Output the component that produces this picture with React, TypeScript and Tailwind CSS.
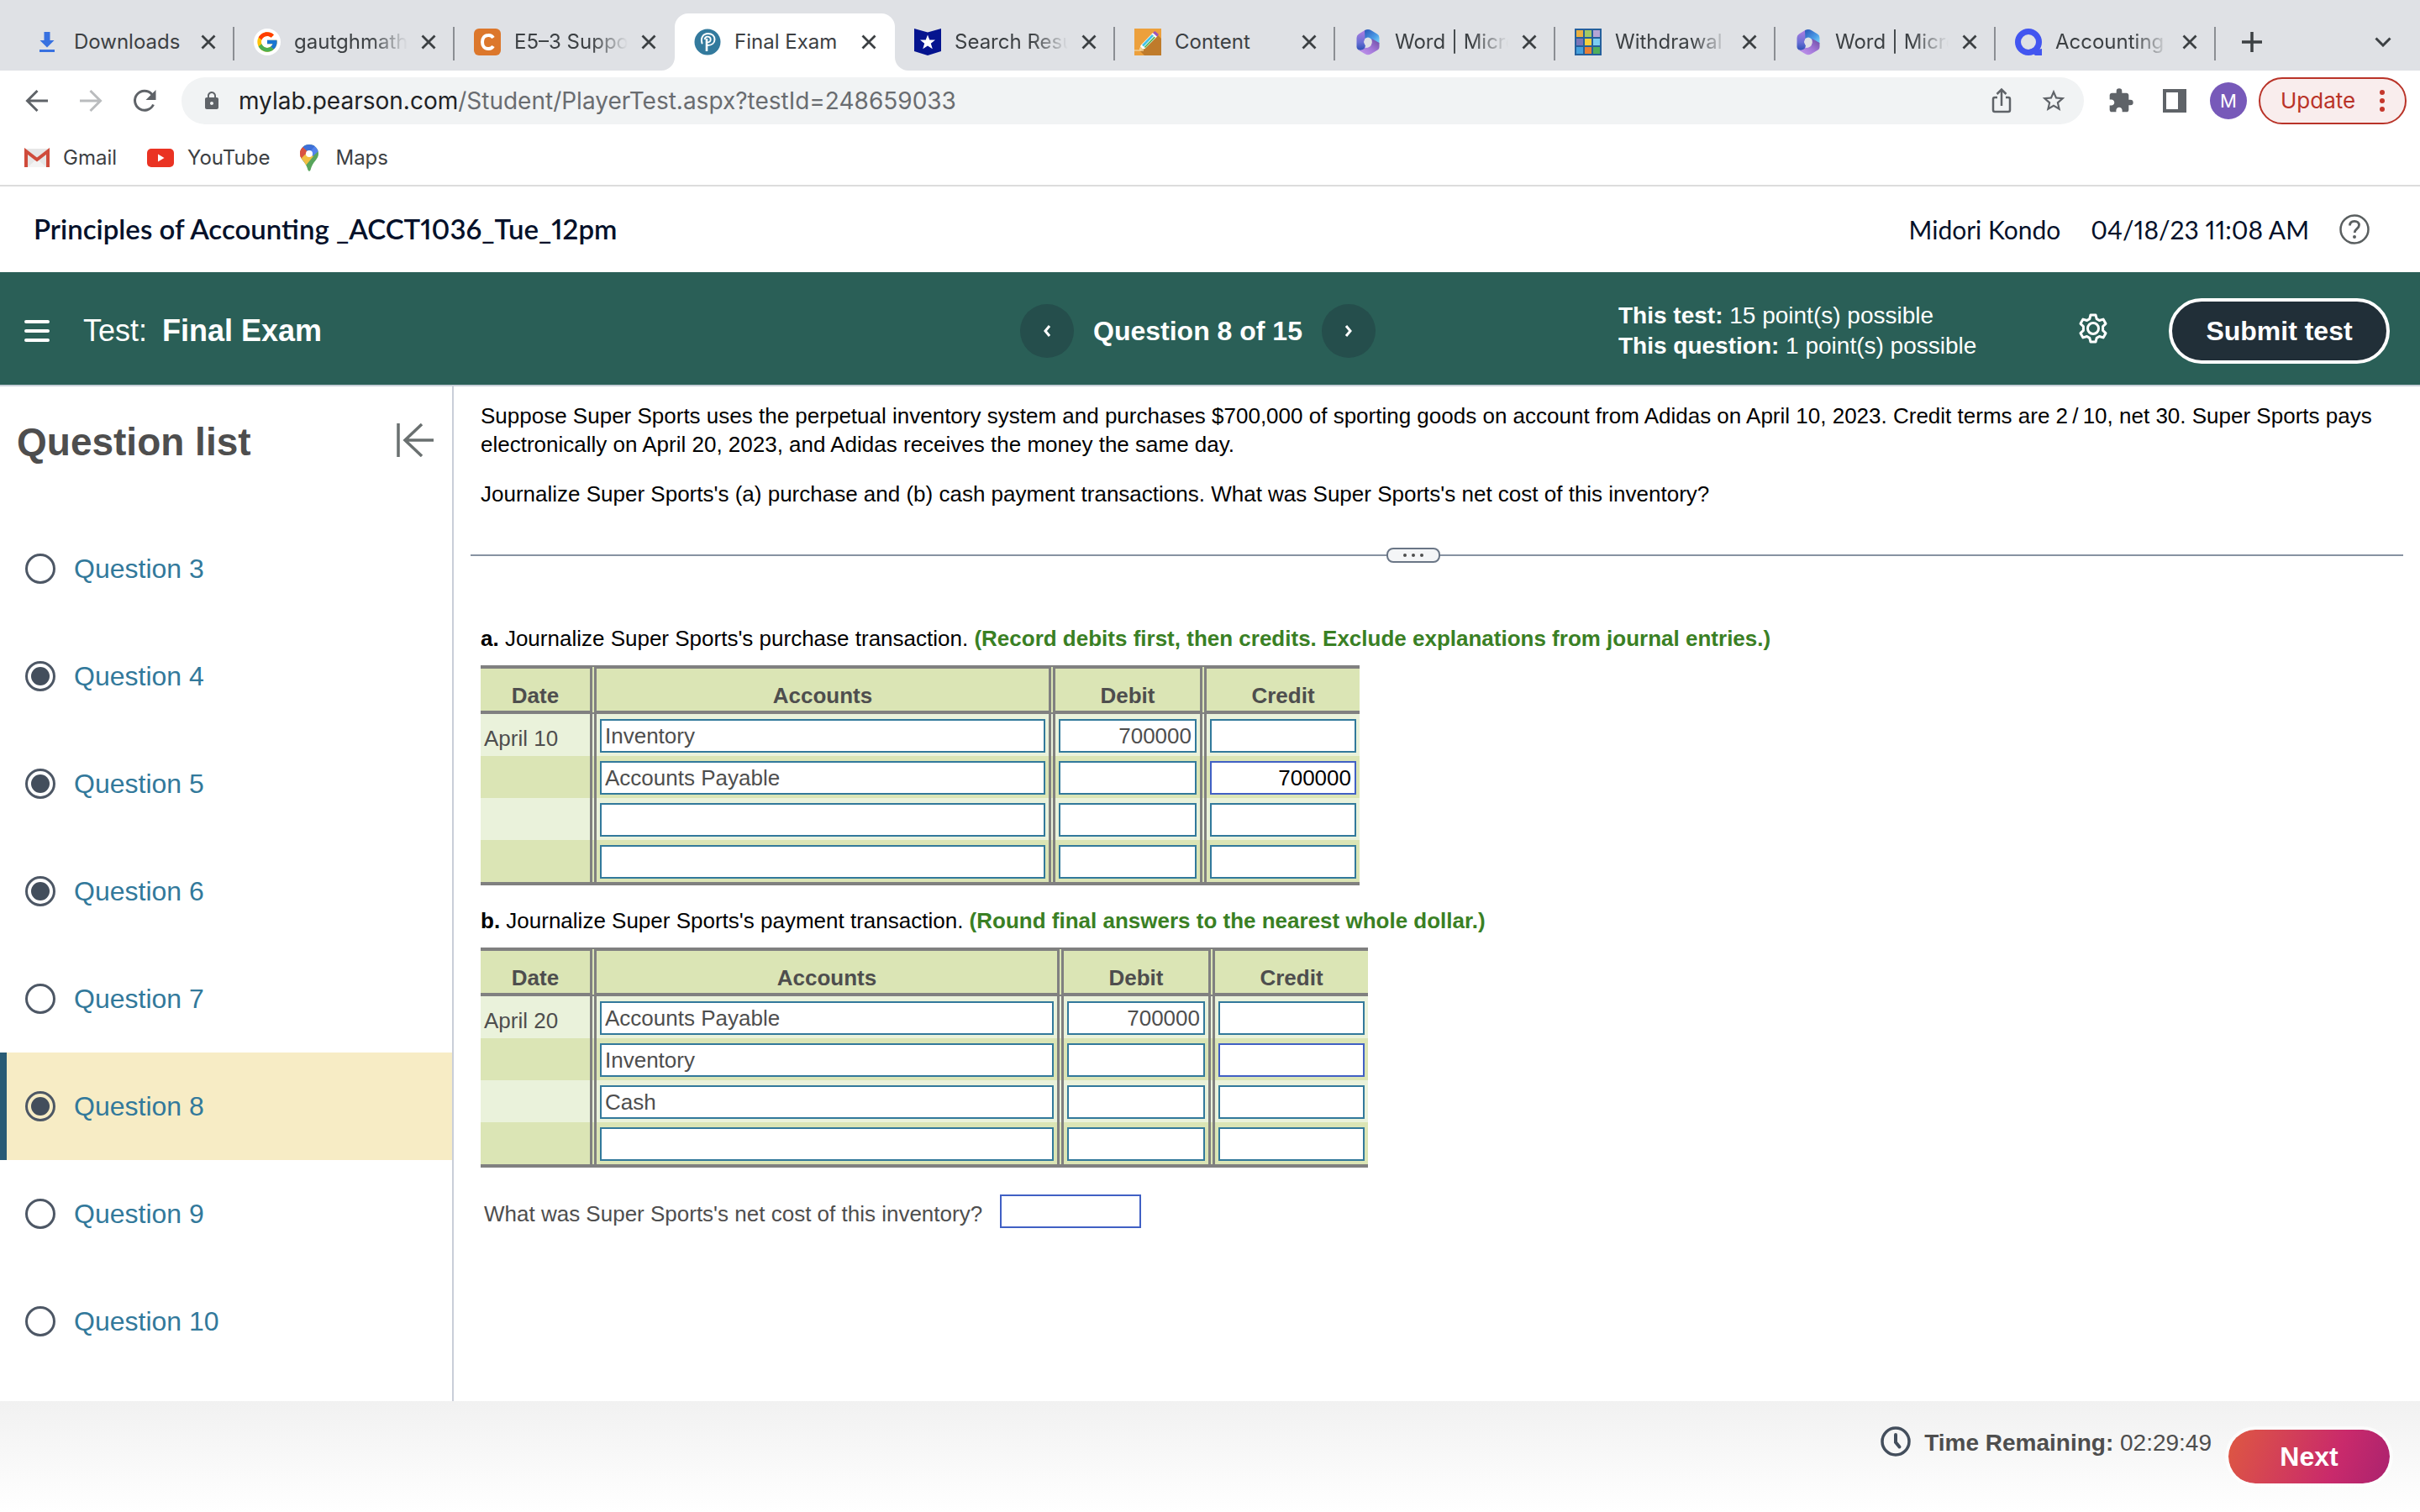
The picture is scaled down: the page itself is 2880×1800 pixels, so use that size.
import { useId, type ReactNode } from "react";
import { FcGoogle } from "react-icons/fc";
import { MdExtension, MdLock, MdStarOutline } from "react-icons/md";

type TabItem = { title: string; icon: ReactNode; active?: boolean; divider?: boolean; fade?: boolean };

function DownloadIcon() {
  return (
    <svg viewBox="0 0 32 32" className="size-8" aria-hidden="true">
      <path d="M12.500 4h7v10h5L16 22.500 7.500 14h5z" fill="#3871e0" />
      <rect x="7" y="25" width="18" height="3" fill="#3871e0" />
    </svg>
  );
}

function GoogleIcon() {
  return (
    <span className="flex size-8 items-center justify-center rounded-full bg-white">
      <FcGoogle className="size-7" />
    </span>
  );
}

function CheggIcon() {
  return (
    <svg viewBox="0 0 32 32" className="size-8" aria-hidden="true">
      <rect width="32" height="32" rx="6" fill="#dc772b" />
      <path d="M23 11A6.500 7 0 0 0 17 8c-4.500 0-7 3.400-7 8s2.500 8 7 8a6.500 7 0 0 0 6-3" fill="none" stroke="#fff" strokeWidth="4" />
    </svg>
  );
}

function PearsonIcon() {
  return (
    <svg viewBox="0 0 32 32" className="size-8" aria-hidden="true">
      <circle cx="16" cy="16" r="15.500" fill="#337a9d" />
      <path d="M9.500 17.500C7.500 11 11 6 16.500 6c5 0 8 2.800 8 7s-3.500 7-8.500 7" fill="none" stroke="#fff" strokeWidth="2" strokeLinecap="round" />
      <path d="M12.500 13c.5-2.500 2.200-3.500 4-3.300 2 .2 3.200 1.500 3.200 3.300 0 2-1.500 3.500-4.200 3.500" fill="none" stroke="#fff" strokeWidth="1.800" />
      <path d="M15 12v15" stroke="#fff" strokeWidth="2.600" />
    </svg>
  );
}

function StarShieldIcon() {
  return (
    <svg viewBox="0 0 32 32" className="size-8" aria-hidden="true">
      <path d="M0 0l16 4.500L32 0v27l-16 5-16-5z" fill="#05148f" />
      <path d="M16 7.500l2.300 6H25l-5.200 4.200 2 6.600L16 20.500l-5.800 3.800 2-6.600L7 13.500h6.700z" fill="#fff" />
    </svg>
  );
}

function PencilIcon() {
  return (
    <svg viewBox="0 0 32 32" className="size-8" aria-hidden="true">
      <rect width="32" height="32" fill="#eca03c" />
      <path d="M28 8l4 4v20H12l-5-5z" fill="#bf7b2b" />
      <path d="M0 26h11" stroke="#f5cf94" strokeWidth="1.500" />
      <path d="M6 26l1.500-6L22 5l5 4.500L12.500 24z" fill="#fff" />
      <path d="M9 19.500L21 7l2 1.800L11 21.500z" fill="#41c3e8" />
      <path d="M11.500 22L23.500 9.500l1.500 1.300L13 23z" fill="#5cb85c" />
      <path d="M22 5l2.500-2L29 7l-2 2.500z" fill="#9a55c0" />
      <path d="M6 26l1.200-4.500 3.300 3.200z" fill="#f0cf8e" />
    </svg>
  );
}

function OfficeIcon() {
  const id = useId();
  return (
    <svg viewBox="0 0 32 32" className="size-8" aria-hidden="true">
      <defs>
        <linearGradient id={`${id}a`} x1="0" y1="0" x2="0" y2="1">
          <stop offset="0" stopColor="#b07ee0" />
          <stop offset="0.600" stopColor="#6a6fd6" />
          <stop offset="1" stopColor="#2b50b4" />
        </linearGradient>
        <linearGradient id={`${id}b`} x1="0" y1="0" x2="1" y2="1">
          <stop offset="0" stopColor="#2a56b8" />
          <stop offset="0.600" stopColor="#4a9be6" />
          <stop offset="1" stopColor="#7fdcf8" />
        </linearGradient>
        <linearGradient id={`${id}c`} x1="1" y1="0" x2="0" y2="1">
          <stop offset="0" stopColor="#6a4aa0" />
          <stop offset="0.500" stopColor="#a277d8" />
          <stop offset="1" stopColor="#c79af0" />
        </linearGradient>
      </defs>
      <path d="M13 1.500L5 6.500Q2.500 8 2.500 11v11q0 2 2 3.200L7 26q3 .5 5-2l1-4-2-4 2-5z" fill={`url(#${id}a)`} />
      <path d="M12 2.300q4-2.600 8 0l7 4.300Q29.500 8 29.500 11v7l-9-4.500Q17 9.500 12.500 12z" fill={`url(#${id}b)`} />
      <path d="M20.500 12l9 5v5q0 2.500-2 3.600l-8 4.700q-3.500 1.800-7 0L4 25.200q5 1.600 8.500-2.200 7.500 0 8-6z" fill={`url(#${id}c)`} />
      <ellipse cx="16" cy="16" rx="4.600" ry="5.400" fill="#dfe1e5" />
    </svg>
  );
}

function GridIcon() {
  const colors = ["#eab040", "#a3c964", "#b5a5d4", "#7a76b8", "#f6cf3c", "#7ccdf0", "#45a0dc", "#e87f35", "#4fae5b"];
  return (
    <svg viewBox="0 0 32 32" className="size-8" aria-hidden="true">
      <rect width="32" height="32" fill="#25609c" />
      {colors.map((c, i) => (
        <rect key={c} x={2 + (i % 3) * 10} y={2 + Math.floor(i / 3) * 10} width="8" height="8" fill={c} />
      ))}
    </svg>
  );
}

function QuizletIcon() {
  return (
    <svg viewBox="0 0 32 32" className="size-8" aria-hidden="true">
      <circle cx="16" cy="16" r="12.500" fill="none" stroke="#4255f0" strokeWidth="7" />
      <path d="M17 25l8-3 2 3 5-1v8h-8z" fill="#4255f0" />
    </svg>
  );
}

function GmailIcon() {
  return (
    <svg viewBox="0 0 30 22" className="h-6 w-[30px]" aria-hidden="true">
      <rect x="1" width="28" height="22" rx="2" fill="#e6e6e6" />
      <path d="M4 22l11-10 11 10z" fill="#f3f3f3" />
      <path d="M2 22V3l13 10L28 3v19" fill="none" stroke="#cf4b3b" strokeWidth="4" />
    </svg>
  );
}

function YouTubeIcon() {
  return (
    <svg viewBox="0 0 32 22" className="h-[22px] w-8" aria-hidden="true">
      <rect width="32" height="22" rx="5" fill="#ea3323" />
      <path d="M13 6.500v9l7.500-4.500z" fill="#fff" />
    </svg>
  );
}

function MapsIcon() {
  const id = useId();
  return (
    <svg viewBox="0 0 22 32" className="h-8 w-[22px]" aria-hidden="true">
      <clipPath id={id}>
        <path d="M11 0a11 11 0 0 1 11 11c0 7-7 9-9.500 19.500Q11 33 9.500 30.500C7 20 0 18 0 11A11 11 0 0 1 11 0z" />
      </clipPath>
      <g clipPath={`url(#${id})`}>
        <rect width="22" height="32" fill="#58a55c" />
        <path d="M0 20L22-6v14L4 24z" fill="#5383ec" />
        <path d="M11 11L3 2-2 10l4 8z" fill="#d85140" />
        <path d="M2 2L11-2l8 2-8 10z" fill="#3e6fd8" />
        <path d="M-2 14l7-6 6 4 5 2-10 12z" fill="#f1bf42" />
        <path d="M-2 5l4-3 7 7-9 9z" fill="#d85140" />
      </g>
      <circle cx="11" cy="11" r="4" fill="#fff" />
    </svg>
  );
}

const tabs: TabItem[] = [
  { title: "Downloads", icon: <DownloadIcon />, divider: true },
  { title: "gautghmath - G", icon: <GoogleIcon />, divider: true, fade: true },
  { title: "E5–3 Supporting", icon: <CheggIcon />, fade: true },
  { title: "Final Exam", icon: <PearsonIcon />, active: true },
  { title: "Search Results", icon: <StarShieldIcon />, divider: true, fade: true },
  { title: "Content", icon: <PencilIcon />, divider: true },
  { title: "Word | Microsoft", icon: <OfficeIcon />, divider: true, fade: true },
  { title: "Withdrawal and", icon: <GridIcon />, divider: true, fade: true },
  { title: "Word | Microsoft", icon: <OfficeIcon />, divider: true, fade: true },
  { title: "Accounting F", icon: <QuizletIcon />, divider: true, fade: true },
];

function BrowserTab({ tab }: { tab: TabItem }) {
  return (
    <div
      className={`relative flex h-[68px] w-[262px] items-center gap-4 pr-[22px] pl-[23px] ${tab.active ? "rounded-t-2xl bg-white" : ""}`}
    >
      {tab.active && (
        <>
          <svg viewBox="0 0 16 16" className="absolute bottom-0 -left-4 size-4" aria-hidden="true">
            <path d="M16 0v16H0A16 16 0 0 0 16 0z" fill="#fff" />
          </svg>
          <svg viewBox="0 0 16 16" className="absolute -right-4 bottom-0 size-4" aria-hidden="true">
            <path d="M0 0v16h16A16 16 0 0 1 0 0z" fill="#fff" />
          </svg>
        </>
      )}
      <button type="button" className="flex min-w-0 flex-1 items-center gap-4 text-left">
        <span className="shrink-0">{tab.icon}</span>
        <span
          className={`min-w-0 flex-1 overflow-hidden whitespace-nowrap ${tab.fade ? "[mask-image:linear-gradient(to_right,#000_68%,transparent)]" : ""}`}
        >
          {tab.title}
        </span>
      </button>
      <button type="button" aria-label={`Close ${tab.title}`} className="shrink-0">
        <svg viewBox="0 0 18 18" className="size-[18px]" aria-hidden="true">
          <path d="M1.500 1.500l15 15m0-15l-15 15" stroke="#3c4043" strokeWidth="2.800" />
        </svg>
      </button>
      {tab.divider && <span className="absolute top-4 right-0 h-10 w-0.5 bg-[#8b8e93]" />}
    </div>
  );
}

function BrowserChrome() {
  return (
    <header className="font-[Inter,sans-serif] text-[24px] leading-8 text-[#3c4043]">
      <div className="flex bg-[#dfe1e5] pt-4 pl-[17px]">
        {tabs.map((t, i) => (
          <BrowserTab key={i} tab={t} />
        ))}
        <div className="flex flex-1 items-center justify-between pr-[34px] pl-[31px]">
          <button type="button" aria-label="New tab">
            <svg viewBox="0 0 24 24" className="size-6" aria-hidden="true">
              <path d="M12 0v24M0 12h24" stroke="#3c4043" strokeWidth="3.500" />
            </svg>
          </button>
          <button type="button" aria-label="Search tabs">
            <svg viewBox="0 0 20 12" className="h-3 w-5" aria-hidden="true">
              <path d="M1.500 1.500l8.500 8.500 8.500-8.500" fill="none" stroke="#3c4043" strokeWidth="3" />
            </svg>
          </button>
        </div>
      </div>

      <div className="flex items-center pt-2 pr-4 pl-[30px]">
        <div className="flex items-center gap-9 pr-[30px]">
          <button type="button" aria-label="Back">
            <svg viewBox="0 0 28 28" className="size-7" aria-hidden="true">
              <path d="M27 14H3M14.500 2L2.500 14l12 12" fill="none" stroke="#5f6368" strokeWidth="3" />
            </svg>
          </button>
          <button type="button" aria-label="Forward">
            <svg viewBox="0 0 28 28" className="size-7" aria-hidden="true">
              <path d="M1 14h24M13.500 2l12 12-12 12" fill="none" stroke="#babcbe" strokeWidth="3" />
            </svg>
          </button>
          <button type="button" aria-label="Reload">
            <svg viewBox="0 0 28 28" className="size-7" aria-hidden="true">
              <path d="M24.500 18.500A11.500 11.500 0 1 1 22.500 6l3 3" fill="none" stroke="#5f6368" strokeWidth="3" />
              <path d="M27.500 1v12h-12z" fill="#5f6368" />
            </svg>
          </button>
        </div>
        <div className="flex h-14 flex-1 items-center rounded-full bg-[#f1f3f4] pr-5 pl-6">
          <MdLock className="size-6 text-[#5f6368]" />
          <div
            role="textbox"
            aria-label="Address and search bar"
            contentEditable
            suppressContentEditableWarning
            className="ml-5 flex-1 text-[28px] text-[#696c70] outline-none"
          >
            <span className="text-[#202124]">mylab.pearson.com</span>/Student/PlayerTest.aspx?testId=248659033
          </div>
          <div className="flex items-center gap-8">
            <button type="button" aria-label="Share">
              <svg viewBox="0 0 28 32" className="h-8 w-7" fill="none" stroke="#5f6368" strokeWidth="2.500" aria-hidden="true">
                <path d="M9 12H6q-2 0-2 2v13q0 2 2 2h16q2 0 2-2V14q0-2-2-2h-3M14 22V3M8.500 8L14 2.500 19.500 8" />
              </svg>
            </button>
            <button type="button" aria-label="Bookmark this tab">
              <MdStarOutline className="size-8 text-[#5f6368]" />
            </button>
          </div>
        </div>
        <button type="button" aria-label="Extensions" className="ml-7">
          <MdExtension className="size-8 text-[#5f6368]" />
        </button>
        <button type="button" aria-label="Side panel" className="ml-[34px]">
          <svg viewBox="0 0 28 28" className="size-7" aria-hidden="true">
            <path d="M0 0h28v28H0zM4 4v20h14V4z" fill="#5f6368" fillRule="evenodd" />
          </svg>
        </button>
        <button type="button" aria-label="Profile" className="ml-7 size-11 rounded-full bg-[#7759b9] text-[22px] text-white">
          M
        </button>
        <button
          type="button"
          className="ml-3.5 flex h-14 w-44 items-center justify-between rounded-full border-2 border-[#b93328] bg-[#f9eded] pr-6 pl-6 text-[26px] text-[#b93328]"
        >
          Update
          <svg viewBox="0 0 6 28" className="h-7 w-1.5" fill="#c5372c" aria-hidden="true">
            <circle cx="3" cy="4" r="3" />
            <circle cx="3" cy="14" r="3" />
            <circle cx="3" cy="24" r="3" />
          </svg>
        </button>
      </div>

      <nav aria-label="Bookmarks" className="flex h-[74px] items-center gap-9 border-b-2 border-[#dcdcdc] pt-2 pl-[29px]">
        <a href="#gmail" className="flex items-center gap-4">
          <GmailIcon />
          Gmail
        </a>
        <a href="#youtube" className="flex items-center gap-4">
          <YouTubeIcon />
          YouTube
        </a>
        <a href="#maps" className="flex items-center gap-5">
          <MapsIcon />
          Maps
        </a>
      </nav>
    </header>
  );
}

function CourseHeader() {
  return (
    <div className="flex h-[102px] items-center justify-between pr-[60px] pl-10 font-[Lato,sans-serif] text-[30px] text-[#05112a] proportional-nums">
      <h1 className="text-[33px] font-semibold">Principles of Accounting _ACCT1036_Tue_12pm</h1>
      <div className="flex items-center">
        <span>Midori Kondo</span>
        <span className="ml-9">04/18/23 11:08 AM</span>
        <button type="button" aria-label="Help" className="ml-9">
          <svg viewBox="0 0 36 36" className="size-9" fill="none" stroke="#5a5f60" aria-hidden="true">
            <circle cx="18" cy="18" r="16.500" strokeWidth="2.500" />
            <path d="M12.500 13.500c0-3.500 2.400-5.200 5.500-5.200s5.500 1.800 5.500 4.800c0 4.400-5.300 4.200-5.300 8.900" strokeWidth="2.800" />
            <circle cx="18" cy="27" r="2" fill="#5a5f60" stroke="none" />
          </svg>
        </button>
      </div>
    </div>
  );
}

function NavCircle({ label, d }: { label: string; d: string }) {
  return (
    <button type="button" aria-label={label} className="flex size-16 items-center justify-center rounded-full bg-[#254e4c]">
      <svg viewBox="0 0 10 16" className="h-4 w-2.5" fill="none" stroke="#fff" strokeWidth="3" aria-hidden="true">
        <path d={d} />
      </svg>
    </button>
  );
}

function TestBar() {
  return (
    <div className="grid h-[136px] grid-cols-[1214fr_712fr_954fr] items-center border-b-2 border-[#c7cfd8] bg-[#2a5f57] pt-1.5 text-white">
      <div className="flex items-center pl-[29px] text-[36px]">
        <button type="button" aria-label="Menu">
          <svg viewBox="0 0 30 28" className="h-7 w-[30px]" stroke="#fff" strokeWidth="4" strokeLinecap="round" aria-hidden="true">
            <path d="M2 3h26M2 14h26M2 25h26" />
          </svg>
        </button>
        <p className="ml-10 flex gap-[18px]">
          Test: <b>Final Exam</b>
        </p>
      </div>
      <div className="flex items-center gap-[23px]">
        <NavCircle label="Previous question" d="M8 2L3 8l5 6" />
        <h2 className="text-[32px] font-bold">Question 8 of 15</h2>
        <NavCircle label="Next question" d="M2 2l5 6-5 6" />
      </div>
      <div className="flex items-center pr-9">
        <div className="text-[28px] leading-9">
          <p>
            <b>This test:</b> 15 point(s) possible
          </p>
          <p>
            <b>This question:</b> 1 point(s) possible
          </p>
        </div>
        <button type="button" aria-label="Settings" className="mr-[72px] mb-1.5 ml-auto">
          <svg viewBox="0 0 36 36" className="size-9" fill="none" stroke="#fff" strokeWidth="3" strokeLinejoin="round" aria-hidden="true">
            <path d="M15 2h6l1.200 4.600 3.200 1.900 4.600-1.400 3 5.200-3.400 3.300v4.800l3.400 3.300-3 5.200-4.600-1.400-3.200 1.900L21 34h-6l-1.200-4.600-3.200-1.900L6 28.900l-3-5.200 3.400-3.300v-4.800L3 12.300l3-5.200 4.600 1.400 3.200-1.900z" />
            <circle cx="18" cy="18" r="6.500" />
          </svg>
        </button>
        <button
          type="button"
          className="h-[78px] w-[263px] rounded-full border-4 border-white bg-[#212f38] text-[32px] font-bold"
        >
          Submit test
        </button>
      </div>
    </div>
  );
}

const questions = [
  { n: 3, done: false },
  { n: 4, done: true },
  { n: 5, done: true },
  { n: 6, done: true },
  { n: 7, done: false },
  { n: 8, done: true },
  { n: 9, done: false },
  { n: 10, done: false },
];

function QuestionList() {
  return (
    <aside className="w-[540px] shrink-0 border-r-2 border-[#c9ced9]">
      <div className="flex h-[153px] items-start justify-between pt-9 pr-[22px] pl-5">
        <h2 className="text-[46px] leading-[60px] font-bold text-[#4e4e4e]">Question list</h2>
        <button type="button" aria-label="Collapse question list" className="pt-2">
          <svg viewBox="0 0 44 40" className="h-10 w-11" fill="none" stroke="#6a7070" strokeWidth="3.500" aria-hidden="true">
            <path d="M2 0v40M44 20H10M30 1L10 20l20 19" />
          </svg>
        </button>
      </div>
      <ul>
        {questions.map((q) => (
          <li key={q.n}>
            <a
              href={`#question-${q.n}`}
              aria-current={q.n === 8 ? "page" : undefined}
              className={`flex h-32 items-center gap-[22px] border-l-8 pl-[22px] text-[32px] text-[#32799b] ${q.n === 8 ? "border-[#295b75] bg-[#f7ecc5]" : "border-transparent"}`}
            >
              <svg viewBox="0 0 36 36" className="size-9" aria-hidden="true">
                <circle cx="18" cy="18" r="16.500" fill="none" stroke="#4d5765" strokeWidth="3" />
                {q.done && <circle cx="18" cy="18" r="11" fill="#434e5c" />}
              </svg>
              Question {q.n}
            </a>
          </li>
        ))}
      </ul>
    </aside>
  );
}

type Entry = { account: string; debit?: string; credit?: string; focused?: boolean };

function Field({ label, value = "", right, focused }: { label: string; value?: string; right?: boolean; focused?: boolean }) {
  return (
    <input
      type="text"
      aria-label={label}
      defaultValue={value}
      className={`block h-10 w-full border-2 bg-white px-1 outline-none ${right ? "text-right" : ""} ${focused ? "border-[#4060c4] text-black" : "border-[#32799b] text-[#4e4e4e]"}`}
    />
  );
}

const headCell = "border-y-4 border-[#808080] pt-3.5";
const split = "border-r-8 border-r-[#808080] [border-right-style:double]";

function Journal({ name, date, accountsCol, rows }: { name: string; date: string; accountsCol: string; rows: Entry[] }) {
  return (
    <table aria-label={name} className="table-fixed border-separate border-spacing-0 text-[#4e4e4e]">
      <colgroup>
        <col className="w-[138px]" />
        <col className={accountsCol} />
        <col className="w-[180px]" />
        <col className="w-[182px]" />
      </colgroup>
      <thead className="bg-[#dbe5b5]">
        <tr className="h-[58px]">
          <th className={`${headCell} ${split}`}>Date</th>
          <th className={`${headCell} ${split}`}>Accounts</th>
          <th className={`${headCell} ${split}`}>Debit</th>
          <th className={headCell}>Credit</th>
        </tr>
      </thead>
      <tbody>
        {rows.map((r, i) => (
          <tr key={i} className="h-[50px] odd:bg-[#eaf2db] even:bg-[#dbe5b5]">
            <td className={`${split} pt-2 pl-1`}>{i === 0 ? date : ""}</td>
            <td className={`${split} px-1 pt-1.5 pb-1`}>
              <Field label={`Account, line ${i + 1}`} value={r.account} />
            </td>
            <td className={`${split} px-1 pt-1.5 pb-1`}>
              <Field label={`Debit, line ${i + 1}`} value={r.debit} right />
            </td>
            <td className="px-1 pt-1.5 pb-1">
              <Field label={`Credit, line ${i + 1}`} value={r.credit} right focused={r.focused} />
            </td>
          </tr>
        ))}
      </tbody>
      <tfoot>
        <tr>
          <td colSpan={4} className="h-1 bg-[#808080] p-0" />
        </tr>
      </tfoot>
    </table>
  );
}

function Problem() {
  return (
    <main className="flex-1 text-[26px] leading-[34px] text-black">
      <div className="pt-[18px] pr-9 pl-8">
        <p>
          Suppose Super Sports uses the perpetual inventory system and purchases $700,000 of sporting goods on account from
          Adidas on April 10, 2023. Credit terms are 2&thinsp;/&thinsp;10, net 30. Super Sports pays electronically on April
          20, 2023, and Adidas receives the money the same day.
        </p>
        <p className="mt-[25px]">
          Journalize Super Sports's (a) purchase and (b) cash payment transactions. What was Super Sports's net cost of this
          inventory?
        </p>
      </div>

      <div className="mt-[47px] flex items-center pr-5 pl-5">
        <span className="h-0.5 w-[1090px] bg-[#8792a2]" />
        <button
          type="button"
          aria-label="Resize panels"
          className="flex h-[18px] w-16 items-center justify-center gap-1.5 rounded-lg border-2 border-[#6a7686] bg-[#f4f5f7]"
        >
          <span className="size-1 rounded-full bg-[#4e4e4e]" />
          <span className="size-1 rounded-full bg-[#4e4e4e]" />
          <span className="size-1 rounded-full bg-[#4e4e4e]" />
        </button>
        <span className="h-0.5 flex-1 bg-[#8792a2]" />
      </div>

      <div className="mt-[73px] pr-9 pl-8">
        <p className="mb-[15px]">
          <b>a.</b> Journalize Super Sports's purchase transaction.{" "}
          <b className="text-[#3a8024]">(Record debits first, then credits. Exclude explanations from journal entries.)</b>
        </p>
        <Journal
          name="Purchase transaction"
          date="April 10"
          accountsCol="w-[546px]"
          rows={[
            { account: "Inventory", debit: "700000" },
            { account: "Accounts Payable", credit: "700000", focused: true },
            { account: "" },
            { account: "" },
          ]}
        />
        <p className="mt-[25px] mb-[15px]">
          <b>b.</b> Journalize Super Sports's payment transaction.{" "}
          <b className="text-[#3a8024]">(Round final answers to the nearest whole dollar.)</b>
        </p>
        <Journal
          name="Payment transaction"
          date="April 20"
          accountsCol="w-[556px]"
          rows={[
            { account: "Accounts Payable", debit: "700000" },
            { account: "Inventory", focused: true },
            { account: "Cash" },
            { account: "" },
          ]}
        />
        <div className="mt-8 flex items-end gap-[21px] pl-1">
          <label htmlFor="net-cost" className="text-[#4e4e4e]">
            What was Super Sports's net cost of this inventory?
          </label>
          <input id="net-cost" type="text" className="h-10 w-[168px] border-2 border-[#4060c4] bg-white px-1 outline-none" />
        </div>
      </div>
    </main>
  );
}

function Footer() {
  return (
    <footer className="flex h-[132px] items-start justify-end bg-gradient-to-b from-[#f1f1f1] to-white pt-[30px] pr-8 text-[28px] leading-9 text-[#4e4e4e]">
      <svg viewBox="0 0 36 36" className="size-9" fill="none" stroke="#434e5c" strokeWidth="3.500" aria-hidden="true">
        <circle cx="18" cy="18" r="16" />
        <path d="M18 10v9l4.500 5.500" strokeWidth="4" strokeLinecap="round" />
      </svg>
      <p className="ml-4 pt-0.5">
        <b>Time Remaining:</b> <time>02:29:49</time>
      </p>
      <button
        type="button"
        className="ml-4 h-[72px] w-[200px] rounded-full border-4 border-white/60 bg-[linear-gradient(110deg,#df5a40_0%,#c92a6b_65%,#a8226f_100%)] bg-origin-border bg-clip-padding text-[32px] font-bold text-white"
      >
        Next
      </button>
    </footer>
  );
}

export default function App() {
  return (
    <div className="flex min-h-screen flex-col bg-white font-['Liberation_Sans',Arial,sans-serif]">
      <BrowserChrome />
      <CourseHeader />
      <TestBar />
      <div className="flex flex-1">
        <QuestionList />
        <Problem />
      </div>
      <Footer />
    </div>
  );
}
